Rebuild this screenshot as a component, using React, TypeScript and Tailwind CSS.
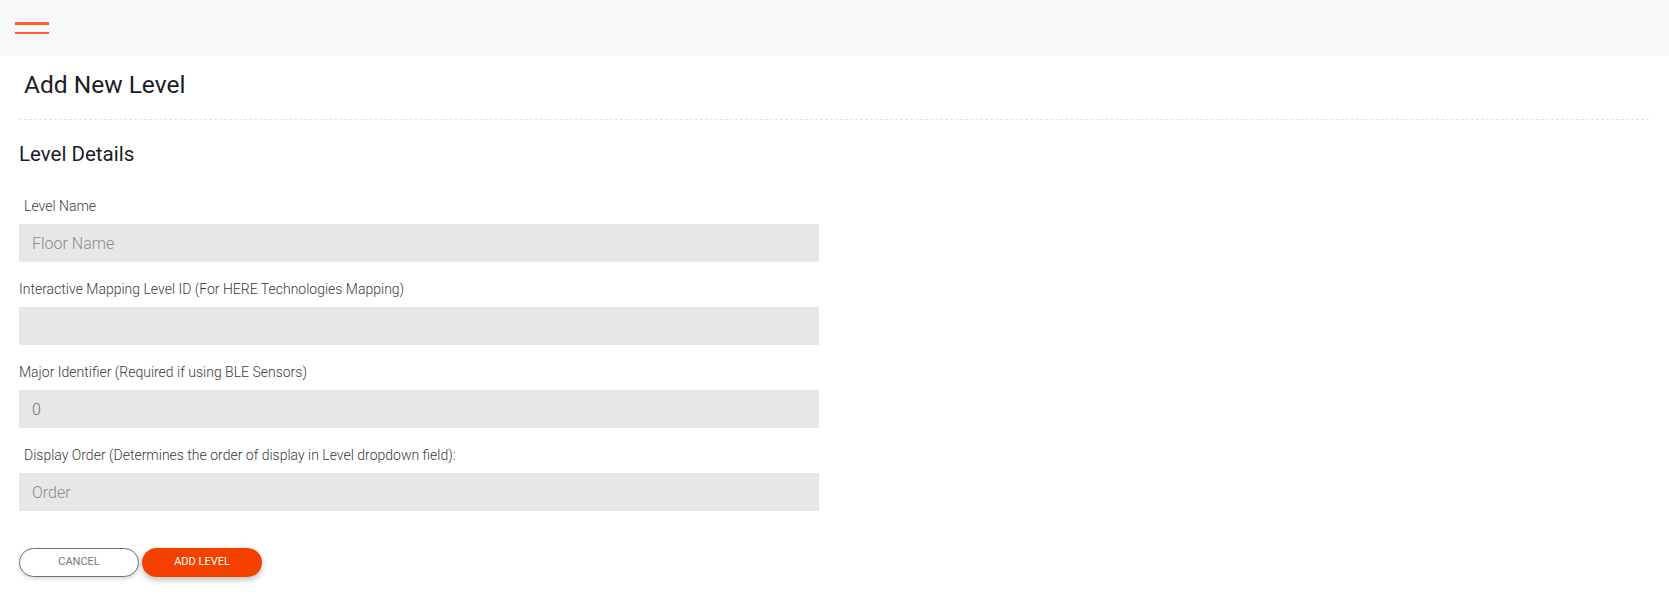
import React from "react"

type FieldProps = {
  label: string
  placeholder?: string
  value?: string
  indent?: boolean
  autoFocus?: boolean
}

const Field = ({ label, placeholder, value, indent, autoFocus }: FieldProps) => {
  return (
    <div className="flex flex-col">
      <label className={`h-5 text-[14px] leading-5 font-light text-[#3a3a3a] ${indent ? "pl-[5px]" : ""}`}>
        {label}
      </label>
      <input
        autoFocus={autoFocus}
        defaultValue={value}
        placeholder={placeholder}
        className="mt-[8px] h-[38px] w-[800px] bg-[#e7e7e7] px-[13px] text-[16px] font-light text-[#707070] placeholder:text-[#8c8c8c] outline-none caret-[#222]"
      />
    </div>
  )
}

export default function App() {
  return (
    <div className="min-h-screen bg-white font-['Roboto',sans-serif]">
      <header className="flex h-[56px] items-center bg-[#f7f8fa] pl-[15px]">
        <button className="flex flex-col gap-[7px]" aria-label="menu">
          <span className="block h-[2.5px] w-[34px] bg-[#ff5a28]" />
          <span className="block h-[2.5px] w-[34px] bg-[#ff5a28]" />
        </button>
      </header>

      <main className="px-[19px] pr-[20px]">
        <div className="border-b border-dashed border-[#e3e3e3] pl-[5px] pt-[14px] pb-[19px]">
          <h1 className="text-[24.5px] leading-[30px] text-[#1c1c28]">Add New Level</h1>
        </div>

        <h2 className="mt-[22px] text-[20.5px] leading-6 text-[#1c1c28]">Level Details</h2>

        <div className="mt-[30px] flex flex-col gap-[17px]">
          <Field label="Level Name" placeholder="Floor Name" indent autoFocus />
          <Field label="Interactive Mapping Level ID (For HERE Technologies Mapping)" />
          <Field label="Major Identifier (Required if using BLE Sensors)" value="0" />
          <Field
            label="Display Order (Determines the order of display in Level dropdown field):"
            placeholder="Order"
            indent
          />
        </div>

        <div className="mt-[37px] flex gap-[3px]">
          <button className="h-[29px] w-[120px] rounded-full border border-[#6f6f6f] bg-white text-[11px] text-[#777] shadow-[0_2px_4px_rgba(0,0,0,0.15)]">
            CANCEL
          </button>
          <button className="h-[29px] w-[120px] rounded-full bg-[#f54100] text-[11px] text-white shadow-[0_3px_6px_rgba(0,0,0,0.25)]">
            ADD LEVEL
          </button>
        </div>
      </main>
    </div>
  )
}
